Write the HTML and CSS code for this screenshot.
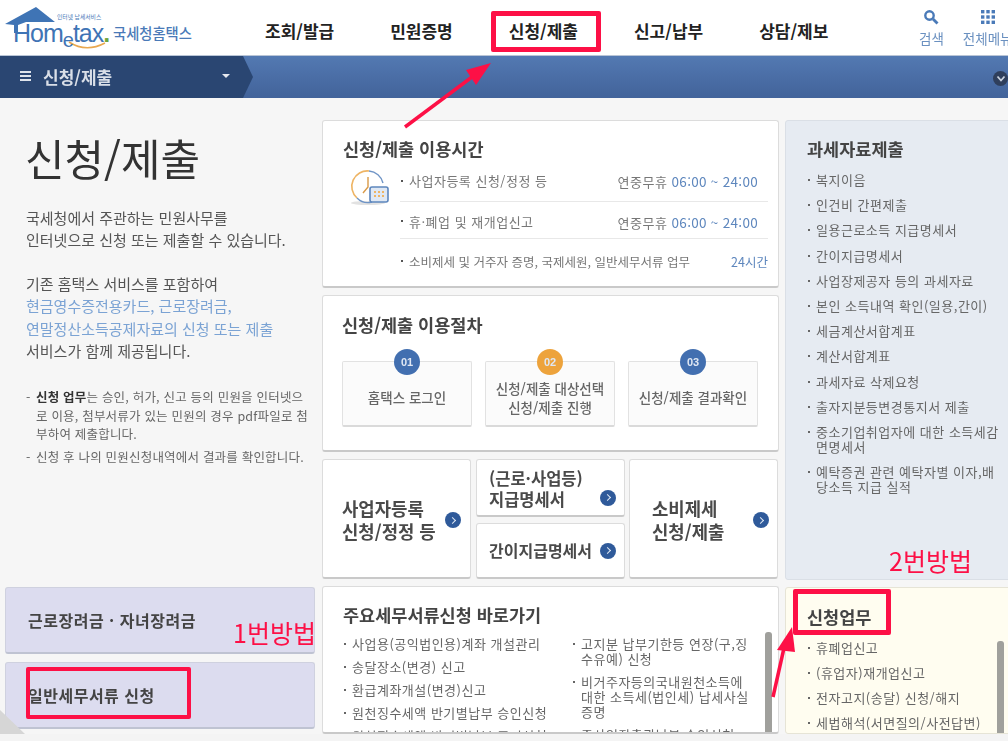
FILE: index.html
```html
<!DOCTYPE html>
<html lang="ko">
<head>
    <meta charset="UTF-8">
    <meta name="viewport" content="width=device-width, initial-scale=1.0">
    <title>신청/제출</title>
    <link rel="stylesheet" href="styles.css">
</head>
<body>
    <header class="top">
        <div class="logo">
            <svg class="logo-house" width="56" height="28" viewBox="0 0 56 28">
                <path d="M1 18 L32 1 L51 16 L22 16 L14 19 L14 27 L10 27 L10 19 Z" fill="#3f74b5"/>
            </svg>
            <svg class="logo-smile" width="38" height="10" viewBox="0 0 38 10">
                <path d="M1 1 Q18 12 37 2" fill="none" stroke="#e9a850" stroke-width="1.6"/>
            </svg>
            <span class="logo-small">인터넷 납세서비스</span>
            <span class="logo-word">Hom<i>e</i>tax<b>.</b></span>
            <span class="logo-kr">국세청홈택스</span>
        </div>
        <nav class="gnb">
            <a>조회/발급</a>
            <a>민원증명</a>
            <a>신청/제출</a>
            <a>신고/납부</a>
            <a>상담/제보</a>
        </nav>
        <div class="top-tools">
            <div class="tool">
                <svg width="16" height="16" viewBox="0 0 16 16">
                    <circle cx="6.5" cy="6.5" r="4.2" fill="none" stroke="#4a7ab8" stroke-width="2.4"/>
                    <path d="M10 10 L14.5 14.5" stroke="#4a7ab8" stroke-width="2.8"/>
                </svg>
                <span>검색</span>
            </div>
            <div class="tool">
                <svg width="16" height="16" viewBox="0 0 16 16" fill="#4a7ab8">
                    <rect x="1" y="1" width="3.4" height="3.4"/><rect x="6.3" y="1" width="3.4" height="3.4"/><rect x="11.6" y="1" width="3.4" height="3.4"/>
                    <rect x="1" y="6.3" width="3.4" height="3.4"/><rect x="6.3" y="6.3" width="3.4" height="3.4"/><rect x="11.6" y="6.3" width="3.4" height="3.4"/>
                    <rect x="1" y="11.6" width="3.4" height="3.4"/><rect x="6.3" y="11.6" width="3.4" height="3.4"/><rect x="11.6" y="11.6" width="3.4" height="3.4"/>
                </svg>
                <span>전체메뉴</span>
            </div>
        </div>
    </header>

    <div class="subnav">
        <div class="crumb">
            <span class="burger"></span>
            <span class="crumb-text">신청/제출</span>
            <span class="caret"></span>
        </div>
        <span class="more">
            <svg width="10" height="8" viewBox="0 0 10 8"><path d="M1.5 1.5 L5 5.5 L8.5 1.5" fill="none" stroke="#c9d2df" stroke-width="1.8"/></svg>
        </span>
    </div>

    <main class="content">
        <section class="intro">
            <div class="intro-top">
                <h1>신청/제출</h1>
                <p class="lead">국세청에서 주관하는 민원사무를<br>인터넷으로 신청 또는 제출할 수 있습니다.</p>
                <p class="lead">기존 홈택스 서비스를 포함하여<br><span class="hl">현금영수증전용카드, 근로장려금,<br>연말정산소득공제자료의 신청 또는 제출</span><br>서비스가 함께 제공됩니다.</p>
                <ul class="notes">
                    <li><strong>신청 업무</strong>는 승인, 허가, 신고 등의 민원을 인터넷으로 이용, 첨부서류가 있는 민원의 경우 pdf파일로 첨부하여 제출합니다.</li>
                    <li>신청 후 나의 민원신청내역에서 결과를 확인합니다.</li>
                </ul>
            </div>
            <a class="side-btn">근로장려금 · 자녀장려금</a>
            <a class="side-btn">일반세무서류 신청</a>
            <span class="corner"></span>
        </section>

        <section class="center">
            <div class="card hours">
                <h2>신청/제출 이용시간</h2>
                <div class="hours-body">
                    <svg class="clock" width="42" height="38" viewBox="0 0 42 38">
                        <ellipse cx="20" cy="34" rx="17" ry="2" fill="#e2e2e2"/>
                        <path d="M21 2 A15.5 15.5 0 0 1 35 14" fill="none" stroke="#6f94c6" stroke-width="1.4"/>
                        <path d="M21 2 A15.5 15.5 0 0 0 9 29" fill="none" stroke="#eeb464" stroke-width="1.6"/>
                        <path d="M9 29 A15.5 15.5 0 0 0 24 33" fill="none" stroke="#6f94c6" stroke-width="1.4"/>
                        <path d="M20 8 L20 18 L15 24" fill="none" stroke="#d99a48" stroke-width="1.4"/>
                        <rect x="22" y="18" width="18" height="15" rx="2" fill="#dfe8f4" stroke="#5d86bd" stroke-width="1.6"/>
                        <path d="M26 23 h2 M30 23 h2 M34 23 h2 M26 27 h2 M30 27 h2 M34 27 h2" stroke="#eeb464" stroke-width="2"/>
                    </svg>
                    <ul class="hours-list">
                        <li><span>사업자등록 신청/정정 등</span><em>연중무휴 <b>06:00 ~ 24:00</b></em></li>
                        <li><span>휴·폐업 및 재개업신고</span><em>연중무휴 <b>06:00 ~ 24:00</b></em></li>
                        <li><span>소비제세 및 거주자 증명, 국제세원, 일반세무서류 업무</span><em><b>24시간</b></em></li>
                    </ul>
                </div>
            </div>

            <div class="card steps">
                <h2>신청/제출 이용절차</h2>
                <div class="step-row">
                    <div class="step"><span class="num">01</span>홈택스 로그인</div>
                    <div class="step"><span class="num orange">02</span>신청/제출 대상선택<br>신청/제출 진행</div>
                    <div class="step"><span class="num">03</span>신청/제출 결과확인</div>
                </div>
            </div>

            <div class="tiles">
                <a class="card tile">
                    <span>사업자등록<br>신청/정정 등</span><i class="go"></i>
                </a>
                <div class="tile-stack">
                    <a class="card tile small top-small">
                        <span>(근로·사업등)<br>지급명세서</span><i class="go"></i>
                    </a>
                    <a class="card tile small">
                        <span>간이지급명세서</span><i class="go"></i>
                    </a>
                </div>
                <a class="card tile indent">
                    <span>소비제세<br>신청/제출</span><i class="go"></i>
                </a>
            </div>

            <div class="card shortcuts">
                <h2>주요세무서류신청 바로가기</h2>
                <div class="short-cols">
                    <ul class="dots">
                        <li>사업용(공익법인용)계좌 개설관리</li>
                        <li>송달장소(변경) 신고</li>
                        <li>환급계좌개설(변경)신고</li>
                        <li>원천징수세액 반기별납부 승인신청</li>
                        <li>원천징수세액 반기별납부 포기신청</li>
                    </ul>
                    <ul class="dots">
                        <li>고지분 납부기한등 연장(구,징수유예) 신청</li>
                        <li>비거주자등의국내원천소득에 대한 소득세(법인세) 납세사실 증명</li>
                        <li>주사업장총괄납부 승인신청</li>
                    </ul>
                </div>
                <span class="scroll"></span>
            </div>
        </section>

        <section class="right">
            <div class="panel blue">
                <h2>과세자료제출</h2>
                <ul class="dots">
                    <li>복지이음</li>
                    <li>인건비 간편제출</li>
                    <li>일용근로소득 지급명세서</li>
                    <li>간이지급명세서</li>
                    <li>사업장제공자 등의 과세자료</li>
                    <li>본인 소득내역 확인(일용,간이)</li>
                    <li>세금계산서합계표</li>
                    <li>계산서합계표</li>
                    <li>과세자료 삭제요청</li>
                    <li>출자지분등변경통지서 제출</li>
                    <li>중소기업취업자에 대한 소득세감면명세서</li>
                    <li>예탁증권 관련 예탁자별 이자,배당소득 지급 실적</li>
                </ul>
            </div>
            <div class="panel cream">
                <h2>신청업무</h2>
                <ul class="dots">
                    <li>휴폐업신고</li>
                    <li>(휴업자)재개업신고</li>
                    <li>전자고지(송달) 신청/해지</li>
                    <li>세법해석(서면질의/사전답변)</li>
                </ul>
                <span class="scroll"></span>
            </div>
        </section>
    </main>

    <!-- 빨간 표시 -->
    <div class="mark mark-nav"></div>
    <div class="mark mark-side"></div>
    <div class="mark mark-work"></div>
    <span class="note note-one">1번방법</span>
    <span class="note note-two">2번방법</span>
    <svg class="arrows" width="1008" height="741" viewBox="0 0 1008 741">
        <path d="M405 127 L476 74" stroke="#fd1046" stroke-width="3.5" fill="none"/>
        <path d="M491 63 L466 70 L476 85 Z" fill="#fd1046"/>
        <path d="M773 697 L784 648" stroke="#fd1046" stroke-width="3.5" fill="none"/>
        <path d="M792 627 L777 650 L795 652 Z" fill="#fd1046"/>
    </svg>
</body>
</html>
```

FILE: styles.css
```css
* {
    box-sizing: border-box;
}
html, body {
    margin: 0;
    padding: 0;
    height: 741px;
    overflow: hidden;
}
body {
    position: relative;
    width: 1008px;
    background-color: #f4f4f4;
    font-family: "Noto Sans CJK KR", "Liberation Sans", sans-serif;
    color: #555;
}
ul {
    list-style: none;
    margin: 0;
    padding: 0;
}
h1, h2, p {
    margin: 0;
}
/* 원본 캡처가 살짝 흐림 */
.top, .subnav, .content {
    filter: blur(0.5px);
}

/* 상단 */
.top {
    display: flex;
    height: 56px;
    background-color: #fff;
    border-bottom: 1px solid #b9c5d6;
}
.logo {
    position: relative;
    width: 235px;
    flex: none;
}
.logo-house {
    position: absolute;
    left: 4px;
    top: 6px;
}
.logo-smile {
    position: absolute;
    left: 68px;
    top: 41px;
}
.logo-small {
    position: absolute;
    left: 57px;
    top: 13px;
    font-size: 5.8px;
    line-height: 7px;
    white-space: nowrap;
    color: #4a7ab8;
}
.logo-word {
    position: absolute;
    left: 13px;
    top: 21px;
    font-family: "Liberation Sans", sans-serif;
    font-size: 25px;
    line-height: 24px;
    letter-spacing: -1px;
    color: #3f74b5;
}
.logo-word i {
    font-style: normal;
    position: relative;
    top: 5px;
    font-size: 20px;
}
.logo-word b {
    color: #6fa53c;
}
.logo-kr {
    position: absolute;
    left: 113px;
    top: 23px;
    font-size: 14.3px;
    line-height: 20px;
    font-weight: 500;
    white-space: nowrap;
    color: #4a7ab8;
}
.gnb {
    display: flex;
    gap: 56px;
    width: 625px;
    flex: none;
    padding-left: 30px;
}
.gnb a {
    padding-top: 19px;
    font-size: 17px;
    line-height: 24px;
    font-weight: 600;
    white-space: nowrap;
    color: #222;
}
.top-tools {
    display: flex;
    gap: 19px;
    padding: 9px 0 0 59px;
}
.tool {
    display: flex;
    flex-direction: column;
    align-items: center;
    flex: none;
    font-size: 13.5px;
    line-height: 16px;
    color: #6a90c0;
}
.tool span {
    margin-top: 5px;
    white-space: nowrap;
}

/* 서브 메뉴 */
.subnav {
    position: relative;
    height: 42px;
    background: linear-gradient(#5379b2, #42639a);
}
.crumb {
    display: flex;
    align-items: center;
    width: 253px;
    height: 42px;
    padding: 0 0 2px 20px;
    background-color: #2a4672;
    clip-path: polygon(0 0, 243px 0, 253px 21px, 243px 42px, 0 42px);
}
.burger {
    width: 11px;
    height: 10px;
    border-top: 2px solid #dfe4ec;
    border-bottom: 2px solid #dfe4ec;
    background: linear-gradient(#dfe4ec, #dfe4ec) center / 100% 2px no-repeat;
}
.crumb-text {
    margin-left: 12px;
    font-size: 17px;
    font-weight: 600;
    white-space: nowrap;
    color: #d9dfe8;
}
.caret {
    margin-left: 110px;
    border-top: 4px solid #e6e9ef;
    border-left: 4px solid transparent;
    border-right: 4px solid transparent;
}
.more {
    position: absolute;
    right: 0;
    top: 15px;
    display: flex;
    align-items: center;
    justify-content: center;
    width: 15px;
    height: 15px;
    border-radius: 50%;
    background-color: #2f3f5c;
}

/* 본문 */
.content {
    display: flex;
    align-items: stretch;
    height: 636px;
    padding-left: 5px;
    background-color: #f6f6f6;
    overflow: hidden;
}
.intro {
    position: relative;
    display: flex;
    flex-direction: column;
    gap: 8px;
    width: 310px;
    flex: none;
    margin-right: 7px;
}
.intro-top {
    height: 481px;
    flex: none;
    padding: 29px 6px 0 21px;
}
.intro h1 {
    margin-left: -1px;
    margin-bottom: 20px;
    font-size: 43px;
    line-height: 60px;
    font-weight: 400;
    color: #333;
}
.lead {
    font-size: 15px;
    line-height: 22.4px;
    color: #555;
    margin-bottom: 21px;
    white-space: nowrap;
}
.hl {
    color: #7ba3d4;
}
.notes {
    margin-top: 26px;
    font-size: 12.5px;
    line-height: 18.5px;
    letter-spacing: 0.2px;
    word-break: break-all;
    color: #666;
}
.notes li {
    position: relative;
    padding-left: 10px;
    margin-bottom: 4.5px;
}
.notes li::before {
    content: "-";
    position: absolute;
    left: 0;
}
.notes strong {
    font-weight: 700;
    color: #333;
}
.side-btn {
    display: flex;
    align-items: center;
    height: 67px;
    flex: none;
    padding-left: 22px;
    background-color: #dcdcef;
    border: 1px solid #cfd1df;
    border-bottom: 2px solid #bfc3d2;
    border-radius: 3px;
    font-size: 16px;
    letter-spacing: 0.5px;
    font-weight: 600;
    white-space: nowrap;
    color: #444;
}
.corner {
    position: absolute;
    left: -5px;
    bottom: 0;
    border-bottom: 24px solid #d6d6d6;
    border-right: 25px solid transparent;
}

.center {
    display: flex;
    flex-direction: column;
    gap: 7px;
    width: 457px;
    flex: none;
    margin-right: 6px;
    padding-top: 22px;
}
.card {
    position: relative;
    background-color: #fff;
    border: 1px solid #dcdcdc;
    border-bottom: 2px solid #c9c9c9;
    border-radius: 3px;
}
.card h2, .panel h2 {
    font-size: 17.5px;
    line-height: 24px;
    font-weight: 600;
    white-space: nowrap;
    color: #444;
}
.hours {
    height: 168px;
    flex: none;
    padding: 16px 10px 0 20px;
}
.hours-body {
    display: flex;
    margin-top: 3px;
}
.clock {
    flex: none;
    margin: 5px 10px 0 5px;
}
.hours-list {
    flex: 1;
    font-size: 13px;
    color: #777;
}
.hours-list li {
    position: relative;
    display: flex;
    justify-content: space-between;
    align-items: center;
    height: 38px;
    padding: 0 10px 4px 9px;
    border-bottom: 1px solid #e8e8e8;
    letter-spacing: 0.5px;
    white-space: nowrap;
}
.hours-list li::before {
    content: "";
    position: absolute;
    left: 1px;
    top: 16px;
    width: 2px;
    height: 2px;
    background-color: #555;
}
.hours-list li:nth-child(2) {
    height: 37px;
    padding: 3px 10px 0 9px;
}
.hours-list li:nth-child(2)::before {
    top: 18px;
}
.hours-list li:last-child {
    height: 44px;
    padding: 0;
    padding-left: 9px;
    border-bottom: 0;
    font-size: 12.5px;
    letter-spacing: 0;
}
.hours-list li:last-child::before {
    top: 21px;
}
.hours-list em {
    font-style: normal;
}
.hours-list b {
    font-size: 13.5px;
    font-weight: 400;
    color: #5d86bd;
    letter-spacing: 0.3px;
}
.hours-list li:last-child b {
    font-size: 12.5px;
    letter-spacing: 0;
}
.steps {
    height: 157px;
    flex: none;
    padding: 17px 20px 0 19px;
}
.step-row {
    display: flex;
    justify-content: space-between;
    margin-top: 24px;
}
.step {
    position: relative;
    display: flex;
    align-items: center;
    justify-content: center;
    width: 130px;
    height: 66px;
    padding-top: 8px;
    background-color: #fbfbfb;
    border: 1px solid #e2e2e2;
    border-bottom: 2px solid #dadada;
    border-radius: 2px;
    text-align: center;
    font-size: 13.5px;
    line-height: 19px;
    font-weight: 500;
    white-space: nowrap;
    color: #666;
}
.num {
    position: absolute;
    left: 50%;
    top: -13px;
    width: 26px;
    height: 26px;
    margin-left: -13px;
    border-radius: 50%;
    background-color: #426fb0;
    font-family: "Liberation Sans", sans-serif;
    font-size: 11px;
    line-height: 26px;
    font-weight: 700;
    color: #dfe7f3;
}
.num.orange {
    background-color: #eda33c;
}
.tiles {
    display: flex;
    gap: 5px;
    height: 120px;
    flex: none;
}
.tile {
    position: relative;
    display: flex;
    align-items: center;
    justify-content: space-between;
    width: 149px;
    flex: none;
    padding: 3px 9px 0 19px;
    font-size: 17.8px;
    line-height: 23px;
    font-weight: 600;
    color: #4a4a4a;
    white-space: nowrap;
}
.tile.indent {
    margin-left: -1px;
    padding: 3px 8px 0 22px;
}
.tile-stack {
    display: flex;
    flex-direction: column;
    gap: 6px;
    width: 149px;
    flex: none;
}
.tile.small {
    flex: 1;
    padding: 0 8px 0 12px;
    font-size: 16px;
}
.tile.small.top-small {
    font-size: 16.5px;
    line-height: 21px;
    padding-top: 2px;
}
.top-small .go {
    margin-top: 18px;
}
.go {
    position: relative;
    width: 16px;
    height: 16px;
    flex: none;
    border-radius: 50%;
    background-color: #2f5a9a;
}
.go::after {
    content: "";
    position: absolute;
    left: 5px;
    top: 5.5px;
    width: 4px;
    height: 4px;
    border-top: 1px solid #dfe7f3;
    border-right: 1px solid #dfe7f3;
    transform: rotate(45deg);
}
.shortcuts {
    flex: 1;
    padding: 16px 0 0 20px;
    overflow: hidden;
}
.short-cols {
    display: flex;
    margin-top: 9px;
}
.short-cols .dots:first-child {
    width: 229px;
    flex: none;
}
.short-cols .dots:last-child {
    width: 180px;
    flex: none;
}
.dots {
    font-size: 13px;
    line-height: 15px;
    letter-spacing: 0.5px;
    word-break: break-all;
    color: #666;
}
.dots li {
    position: relative;
    padding-left: 9px;
    margin-bottom: 8px;
}
.dots li::before {
    content: "";
    position: absolute;
    left: 1px;
    top: 7px;
    width: 2px;
    height: 2px;
    background-color: #666;
}
.short-cols .dots:first-child li {
    white-space: nowrap;
}
.scroll {
    position: absolute;
    top: 45px;
    right: 6px;
    width: 7px;
    height: 120px;
    border-radius: 3px;
    background-color: #a0a09c;
}

.right {
    display: flex;
    flex-direction: column;
    gap: 7px;
    width: 235px;
    flex: none;
    padding-top: 22px;
}
.panel {
    position: relative;
    padding: 16px 14px 0 21px;
    border: 1px solid #dadfe6;
    border-radius: 3px;
    overflow: hidden;
}
.panel h2 {
    margin-bottom: 11px;
}
.panel.blue {
    height: 460px;
    flex: none;
    background-color: #e6ebf2;
}
.panel.blue .dots li {
    margin-bottom: 10.2px;
}
.panel.cream {
    flex: 1;
    padding-top: 17px;
    background-color: #fffdf0;
    border-color: #e6e4d6;
}
.panel.cream .dots {
    padding-right: 4px;
}
.panel.cream .dots li {
    margin-bottom: 10px;
}
.panel.cream .scroll {
    top: 53px;
    right: 15px;
}

/* 빨간 표시 */
.mark {
    position: absolute;
    border: 5px solid #fd1046;
    border-radius: 2px;
}
.mark-nav {
    left: 491px;
    top: 11px;
    width: 110px;
    height: 41px;
}
.mark-side {
    left: 26px;
    top: 667px;
    width: 165px;
    height: 52px;
    border-width: 4px;
}
.mark-work {
    left: 793px;
    top: 589px;
    width: 98px;
    height: 46px;
}
.note {
    position: absolute;
    font-size: 25px;
    line-height: 30px;
    font-weight: 400;
    color: #fd1046;
}
.note-one {
    left: 233px;
    top: 617px;
}
.note-two {
    left: 889px;
    top: 545px;
}
.arrows {
    position: absolute;
    left: 0;
    top: 0;
}
```
